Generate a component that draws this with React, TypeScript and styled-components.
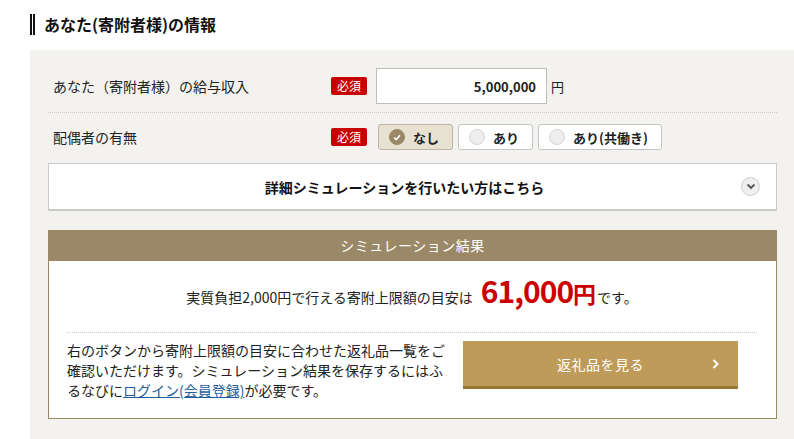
import styled, { createGlobalStyle } from 'styled-components'

const GlobalStyle = createGlobalStyle`
  body {
    margin: 0;
    background: #fff;
    color: #222;
    font-family: "Noto Sans CJK JP", "Liberation Sans", sans-serif;
  }
`

const Page = styled.div`
  padding: 14px 0 0 30px;
`

const Heading = styled.h2`
  margin: 0;
  height: 21px;
  line-height: 21px;
  border-left: 5px double #111;
  padding-left: 9px;
  font-size: 16px;
  font-weight: 700;
  color: #111;
`

const Panel = styled.div`
  margin-top: 15px;
  background: #f3f2ee;
  padding: 18px 17px 20px 18px;
`

const FormRow = styled.div<{ $divider?: boolean }>`
  display: flex;
  align-items: center;
  padding: ${(p) => (p.$divider ? '0 0 8px 5px' : '11px 0 0 5px')};
  border-bottom: ${(p) => (p.$divider ? '1px dotted #c8c8c8' : 'none')};
`

const Label = styled.div`
  width: 278px;
  font-size: 14px;
  color: #222;
`

const Required = styled.span`
  width: 36px;
  height: 18px;
  line-height: 18px;
  text-align: center;
  background: #c80000;
  color: #fff;
  font-size: 12px;
  border-radius: 2px;
  margin-right: 9px;
`

const Input = styled.input`
  box-sizing: border-box;
  width: 171px;
  height: 36px;
  border: 1px solid #bdbdbd;
  background: #fff;
  padding: 0 10px;
  text-align: right;
  font-family: inherit;
  font-size: 13px;
  font-weight: 700;
  color: #222;
  outline: none;
`

const Unit = styled.span`
  margin-left: 4px;
  font-size: 13px;
`

const Choices = styled.div`
  display: flex;
  gap: 5px;
  margin-left: 2px;
`

const Choice = styled.button<{ $selected?: boolean }>`
  display: flex;
  align-items: center;
  gap: 8px;
  height: 26px;
  padding: 0 13px 0 10px;
  border: 1px solid ${(p) => (p.$selected ? '#bcb5a3' : '#c4c4c4')};
  border-radius: 3px;
  background: ${(p) => (p.$selected ? '#e7e1d1' : '#fff')};
  font-family: inherit;
  font-size: 13px;
  font-weight: 700;
  color: #222;
  cursor: pointer;
`

const Dot = styled.span<{ $selected?: boolean }>`
  display: flex;
  align-items: center;
  justify-content: center;
  box-sizing: border-box;
  width: 16px;
  height: 16px;
  border-radius: 50%;
  background: ${(p) => (p.$selected ? '#9a8866' : '#eeeeee')};
  border: 1px solid ${(p) => (p.$selected ? '#9a8866' : '#d4d4d4')};
`

const DetailToggle = styled.div`
  display: flex;
  align-items: center;
  margin-top: 13px;
  height: 45px;
  background: #fff;
  border: 1px solid #c9c9c9;
  border-bottom-width: 2px;
  padding: 0 16px 0 0;
`

const DetailText = styled.span`
  flex: 1;
  text-align: center;
  font-size: 14px;
  font-weight: 700;
  color: #111;
  padding-left: 19px;
`

const Arrow = styled.span`
  display: flex;
  align-items: center;
  justify-content: center;
  box-sizing: border-box;
  width: 19px;
  height: 19px;
  border-radius: 50%;
  background: #efefef;
  border: 1px solid #cfcfcf;
`

const Result = styled.section`
  margin-top: 19px;
`

const ResultHead = styled.div`
  height: 31px;
  line-height: 31px;
  background: #9a8866;
  color: #fff;
  text-align: center;
  font-size: 14px;
  letter-spacing: 0.5px;
`

const ResultBody = styled.div`
  background: #fff;
  border: 1px solid #9a8866;
  border-top: none;
  padding: 0 19px 18px 18px;
`

const Estimate = styled.p`
  margin: 0;
  height: 72px;
  display: flex;
  align-items: baseline;
  justify-content: center;
  padding-top: 7px;
  box-sizing: border-box;
  border-bottom: 1px dotted #c8c8c8;
  font-size: 14px;
  color: #222;
`

const Amount = styled.strong`
  margin-left: 8px;
  font-size: 30px;
  font-weight: 700;
  color: #cc0000;
  letter-spacing: -1px;
`

const Yen = styled.strong`
  font-size: 23px;
  font-weight: 700;
  color: #cc0000;
  margin-right: 1px;
`

const Lower = styled.div`
  display: flex;
  align-items: flex-start;
  padding-top: 7px;
`

const Note = styled.p`
  margin: 0;
  width: 384px;
  font-size: 14px;
  line-height: 20px;
  color: #222;
`

const LoginLink = styled.a`
  color: #1f5d9c;
  text-decoration: underline;
`

const ListButton = styled.button`
  display: grid;
  grid-template-columns: 40px 1fr 40px;
  align-items: center;
  margin: 1px 0 0 12px;
  width: 275px;
  height: 48px;
  border: none;
  border-bottom: 3px solid #9a7634;
  background: #bf9b5a;
  color: #fff;
  font-family: inherit;
  font-size: 14px;
  letter-spacing: 0.5px;
  cursor: pointer;
  padding: 0;
`

const ButtonChevron = styled.span`
  display: flex;
  justify-content: center;
  padding-right: 6px;
`

export default function App() {
  return (
    <Page>
      <GlobalStyle />
      <Heading>あなた(寄附者様)の情報</Heading>

      <Panel>
        <FormRow $divider>
          <Label>あなた（寄附者様）の給与収入</Label>
          <Required>必須</Required>
          <Input defaultValue="5,000,000" />
          <Unit>円</Unit>
        </FormRow>

        <FormRow>
          <Label>配偶者の有無</Label>
          <Required>必須</Required>
          <Choices>
            <Choice $selected>
              <Dot $selected>
                <svg width="8" height="7" viewBox="0 0 8 7">
                  <path d="M1 3.5 L3.2 5.5 L7 1.2" fill="none" stroke="#fff" strokeWidth="1.6" />
                </svg>
              </Dot>
              なし
            </Choice>
            <Choice>
              <Dot />
              あり
            </Choice>
            <Choice>
              <Dot />
              あり(共働き)
            </Choice>
          </Choices>
        </FormRow>

        <DetailToggle>
          <DetailText>詳細シミュレーションを行いたい方はこちら</DetailText>
          <Arrow>
            <svg width="10" height="7" viewBox="0 0 10 7">
              <path d="M1.5 1.5 L5 5 L8.5 1.5" fill="none" stroke="#555" strokeWidth="1.8" />
            </svg>
          </Arrow>
        </DetailToggle>

        <Result>
          <ResultHead>シミュレーション結果</ResultHead>
          <ResultBody>
            <Estimate>
              実質負担2,000円で行える寄附上限額の目安は
              <Amount>61,000</Amount>
              <Yen>円</Yen>
              です。
            </Estimate>
            <Lower>
              <Note>
                右のボタンから寄附上限額の目安に合わせた返礼品一覧をご確認いただけます。シミュレーション結果を保存するにはふるなびに
                <LoginLink href="#">ログイン(会員登録)</LoginLink>
                が必要です。
              </Note>
              <ListButton>
                <span />
                <span>返礼品を見る</span>
                <ButtonChevron>
                  <svg width="7" height="10" viewBox="0 0 7 10">
                    <path d="M1.5 1 L5.5 5 L1.5 9" fill="none" stroke="#fff" strokeWidth="2" />
                  </svg>
                </ButtonChevron>
              </ListButton>
            </Lower>
          </ResultBody>
        </Result>
      </Panel>
    </Page>
  )
}
